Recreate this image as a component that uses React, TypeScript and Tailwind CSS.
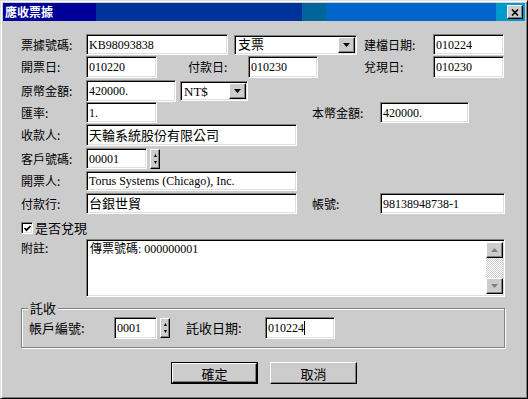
import type { ReactNode } from 'react';

const sunken =
  'bg-white border border-t-[#808080] border-l-[#808080] border-r-white border-b-white shadow-[inset_1px_1px_0_#000,inset_-1px_-1px_0_#dfdfdf]';
const raised =
  'bg-[#cccccc] border border-t-white border-l-white border-r-black border-b-black shadow-[inset_-1px_-1px_0_#808080]';
const serif = "font-['Liberation_Serif','Noto_Sans_CJK_TC',serif]";
const sans = "font-['Noto_Sans_CJK_TC',sans-serif]";

function Label({ className = '', children }: { className?: string; children: ReactNode }) {
  return (
    <div className={`${sans} text-[12px] leading-[14px] text-black shrink-0 whitespace-nowrap ${className}`}>
      {children}
    </div>
  );
}

function Field({
  className = '',
  zh = false,
  children,
}: {
  className?: string;
  zh?: boolean;
  children?: ReactNode;
}) {
  return (
    <div
      className={`${sunken} ${serif} ${zh ? 'text-[13px]' : 'text-[12px]'} shrink-0 flex items-center pl-[2px] leading-none text-black whitespace-nowrap overflow-hidden ${className}`}
    >
      {children}
    </div>
  );
}

function DownArrow() {
  return (
    <svg width="7" height="4" viewBox="0 0 7 4">
      <path d="M0 0h7L3.5 4z" fill="#000" />
    </svg>
  );
}

function Combo({ className = '', children }: { className?: string; children: ReactNode }) {
  return (
    <div className={`${sunken} ${serif} text-[13px] leading-none shrink-0 flex items-center justify-between p-[1px] ${className}`}>
      <span className="pl-[2px]">{children}</span>
      <div className={`${raised} w-[17px] h-full flex items-center justify-center`}>
        <DownArrow />
      </div>
    </div>
  );
}

function Spin({ className = '' }: { className?: string }) {
  return (
    <div className={`${raised} shrink-0 flex flex-col items-center justify-center gap-[4px] ${className}`}>
      <svg width="3" height="3" viewBox="0 0 3 3">
        <path d="M1.5 0L3 3H0z" fill="#000" />
      </svg>
      <svg width="3" height="3" viewBox="0 0 3 3">
        <path d="M0 0h3L1.5 3z" fill="#000" />
      </svg>
    </div>
  );
}

function Scrollbar() {
  return (
    <div className="w-[17px] h-full flex flex-col shrink-0">
      <div className={`${raised} h-[16px] flex items-center justify-center`}>
        <svg width="7" height="4" viewBox="0 0 7 4">
          <path d="M3.5 0L7 4H0z" fill="#808080" />
        </svg>
      </div>
      <div className="flex-1 bg-[repeating-conic-gradient(#ffffff_0_25%,#cccccc_0_50%)] bg-[length:2px_2px]" />
      <div className={`${raised} h-[16px] flex items-center justify-center`}>
        <svg width="7" height="4" viewBox="0 0 7 4">
          <path d="M0 0h7L3.5 4z" fill="#808080" />
        </svg>
      </div>
    </div>
  );
}

export default function App() {
  return (
    <div className="w-[528px] h-[399px] bg-[#cccccc] border border-t-[#dfdfdf] border-l-[#dfdfdf] border-r-black border-b-black shadow-[inset_1px_1px_0_#fff,inset_-1px_-1px_0_#808080] p-[2px] flex flex-col overflow-hidden">
      {/* Title bar */}
      <div className="h-[18px] shrink-0 flex items-center justify-between pl-[2px] pr-[2px] bg-[linear-gradient(90deg,#000099_0_93px,#003399_93px_299px,#006699_299px_323px,#0066cc_323px_493px,#0099cc_493px)]">
        <span className={`${sans} text-white font-bold text-[12px] leading-none`}>應收票據</span>
        <button className={`${raised} w-[16px] h-[14px] flex items-center justify-center p-0`}>
          <svg width="8" height="7" viewBox="0 0 8 7">
            <path d="M1 0.5l6 6M7 0.5l-6 6" stroke="#000" strokeWidth="1.6" />
          </svg>
        </button>
      </div>

      {/* Body */}
      <div className="flex flex-col pl-[18px]">
        <div className="mt-[13px] h-[21px] flex items-center">
          <Label className="w-[65px]">票據號碼:</Label>
          <Field className="w-[142px] h-[21px]">KB98093838</Field>
          <Combo className="ml-[6px] w-[123px] h-[20px]">支票</Combo>
          <Label className="ml-[7px] w-[69px]">建檔日期:</Label>
          <Field className="w-[71px] h-[21px]">010224</Field>
        </div>

        <div className="mt-[1px] h-[22px] flex items-center">
          <Label className="w-[65px]">開票日:</Label>
          <Field className="w-[71px] h-[22px]">010220</Field>
          <Label className="ml-[31px] w-[60px]">付款日:</Label>
          <Field className="w-[70px] h-[22px]">010230</Field>
          <Label className="ml-[46px] w-[69px]">兌現日:</Label>
          <Field className="w-[71px] h-[22px]">010230</Field>
        </div>

        <div className="mt-[2px] h-[22px] flex items-center">
          <Label className="w-[65px]">原幣金額:</Label>
          <Field className="w-[90px] h-[22px]">420000.</Field>
          <Combo className="ml-[4px] w-[68px] h-[20px]">NT$</Combo>
        </div>

        <div className="h-[21px] flex items-center">
          <Label className="w-[65px]">匯率:</Label>
          <Field className="w-[71px] h-[21px]">1.</Field>
          <Label className="ml-[155px] w-[68px]">本幣金額:</Label>
          <Field className="w-[89px] h-[21px]">420000.</Field>
        </div>

        <div className="mt-[1px] h-[22px] flex items-center">
          <Label className="w-[65px]">收款人:</Label>
          <Field zh className="w-[211px] h-[22px]">天輪系統股份有限公司</Field>
        </div>

        <div className="mt-[2px] h-[21px] flex items-center">
          <Label className="w-[65px]">客戶號碼:</Label>
          <Field className="w-[61px] h-[21px]">00001</Field>
          <Spin className="ml-[3px] w-[10px] h-[20px]" />
        </div>

        <div className="mt-[2px] h-[20px] flex items-center">
          <Label className="w-[65px]">開票人:</Label>
          <Field className="w-[211px] h-[20px]">Torus Systems (Chicago), Inc.</Field>
        </div>

        <div className="mt-[2px] h-[21px] flex items-center">
          <Label className="w-[65px]">付款行:</Label>
          <Field zh className="w-[211px] h-[21px]">台銀世貿</Field>
          <Label className="ml-[15px] w-[68px]">帳號:</Label>
          <Field className="w-[125px] h-[21px]">98138948738-1</Field>
        </div>

        <div className="mt-[7px] h-[14px] flex items-center">
          <div className={`${sunken} w-[12px] h-[12px] flex items-center justify-center`}>
            <svg width="7" height="7" viewBox="0 0 7 7">
              <path d="M0.5 3l2 2.2L6.5 1" stroke="#000" strokeWidth="1.8" fill="none" />
            </svg>
          </div>
          <Label className="ml-[2px] text-[13px]">是否兌現</Label>
        </div>

        <div className="mt-[4px] flex">
          <Label className="w-[65px] pt-[2px]">附註:</Label>
          <div className={`${sunken} w-[419px] h-[58px] flex p-[2px] pr-[1px]`}>
            <div className={`flex-1 ${serif} text-[12px] leading-[14px] pl-[1px] text-black`}>傳票號碼: 000000001</div>
            <Scrollbar />
          </div>
        </div>

        {/* 託收 group */}
        <div className="mt-[11px] w-[484px] h-[40px] border border-[#808080] shadow-[inset_1px_1px_0_#fff,1px_1px_0_#fff] flex flex-col">
          <div className={`${sans} -mt-[8px] ml-[6px] px-[2px] bg-[#cccccc] w-fit text-[13px] leading-[14px] text-black`}>
            託收
          </div>
          <div className="mt-[2px] h-[22px] flex items-center">
            <Label className="ml-[7px] w-[85px] text-[13px]">帳戶編號:</Label>
            <Field className="w-[43px] h-[22px]">0001</Field>
            <Spin className="ml-[3px] w-[10px] h-[20px]" />
            <Label className="ml-[16px] w-[79px] text-[13px]">託收日期:</Label>
            <Field className="w-[70px] h-[22px]">
              010224
              <span className="inline-block w-[1px] h-[14px] bg-black" />
            </Field>
          </div>
        </div>

        <div className="mt-[14px] ml-[150px] flex gap-[12px]">
          <div className="border border-black">
            <button className={`${raised} ${sans} w-[85px] h-[20px] text-[13px] leading-none text-black flex items-center justify-center`}>
              確定
            </button>
          </div>
          <button className={`${raised} ${sans} w-[87px] h-[22px] text-[13px] leading-none text-black flex items-center justify-center`}>
            取消
          </button>
        </div>
      </div>
    </div>
  );
}
